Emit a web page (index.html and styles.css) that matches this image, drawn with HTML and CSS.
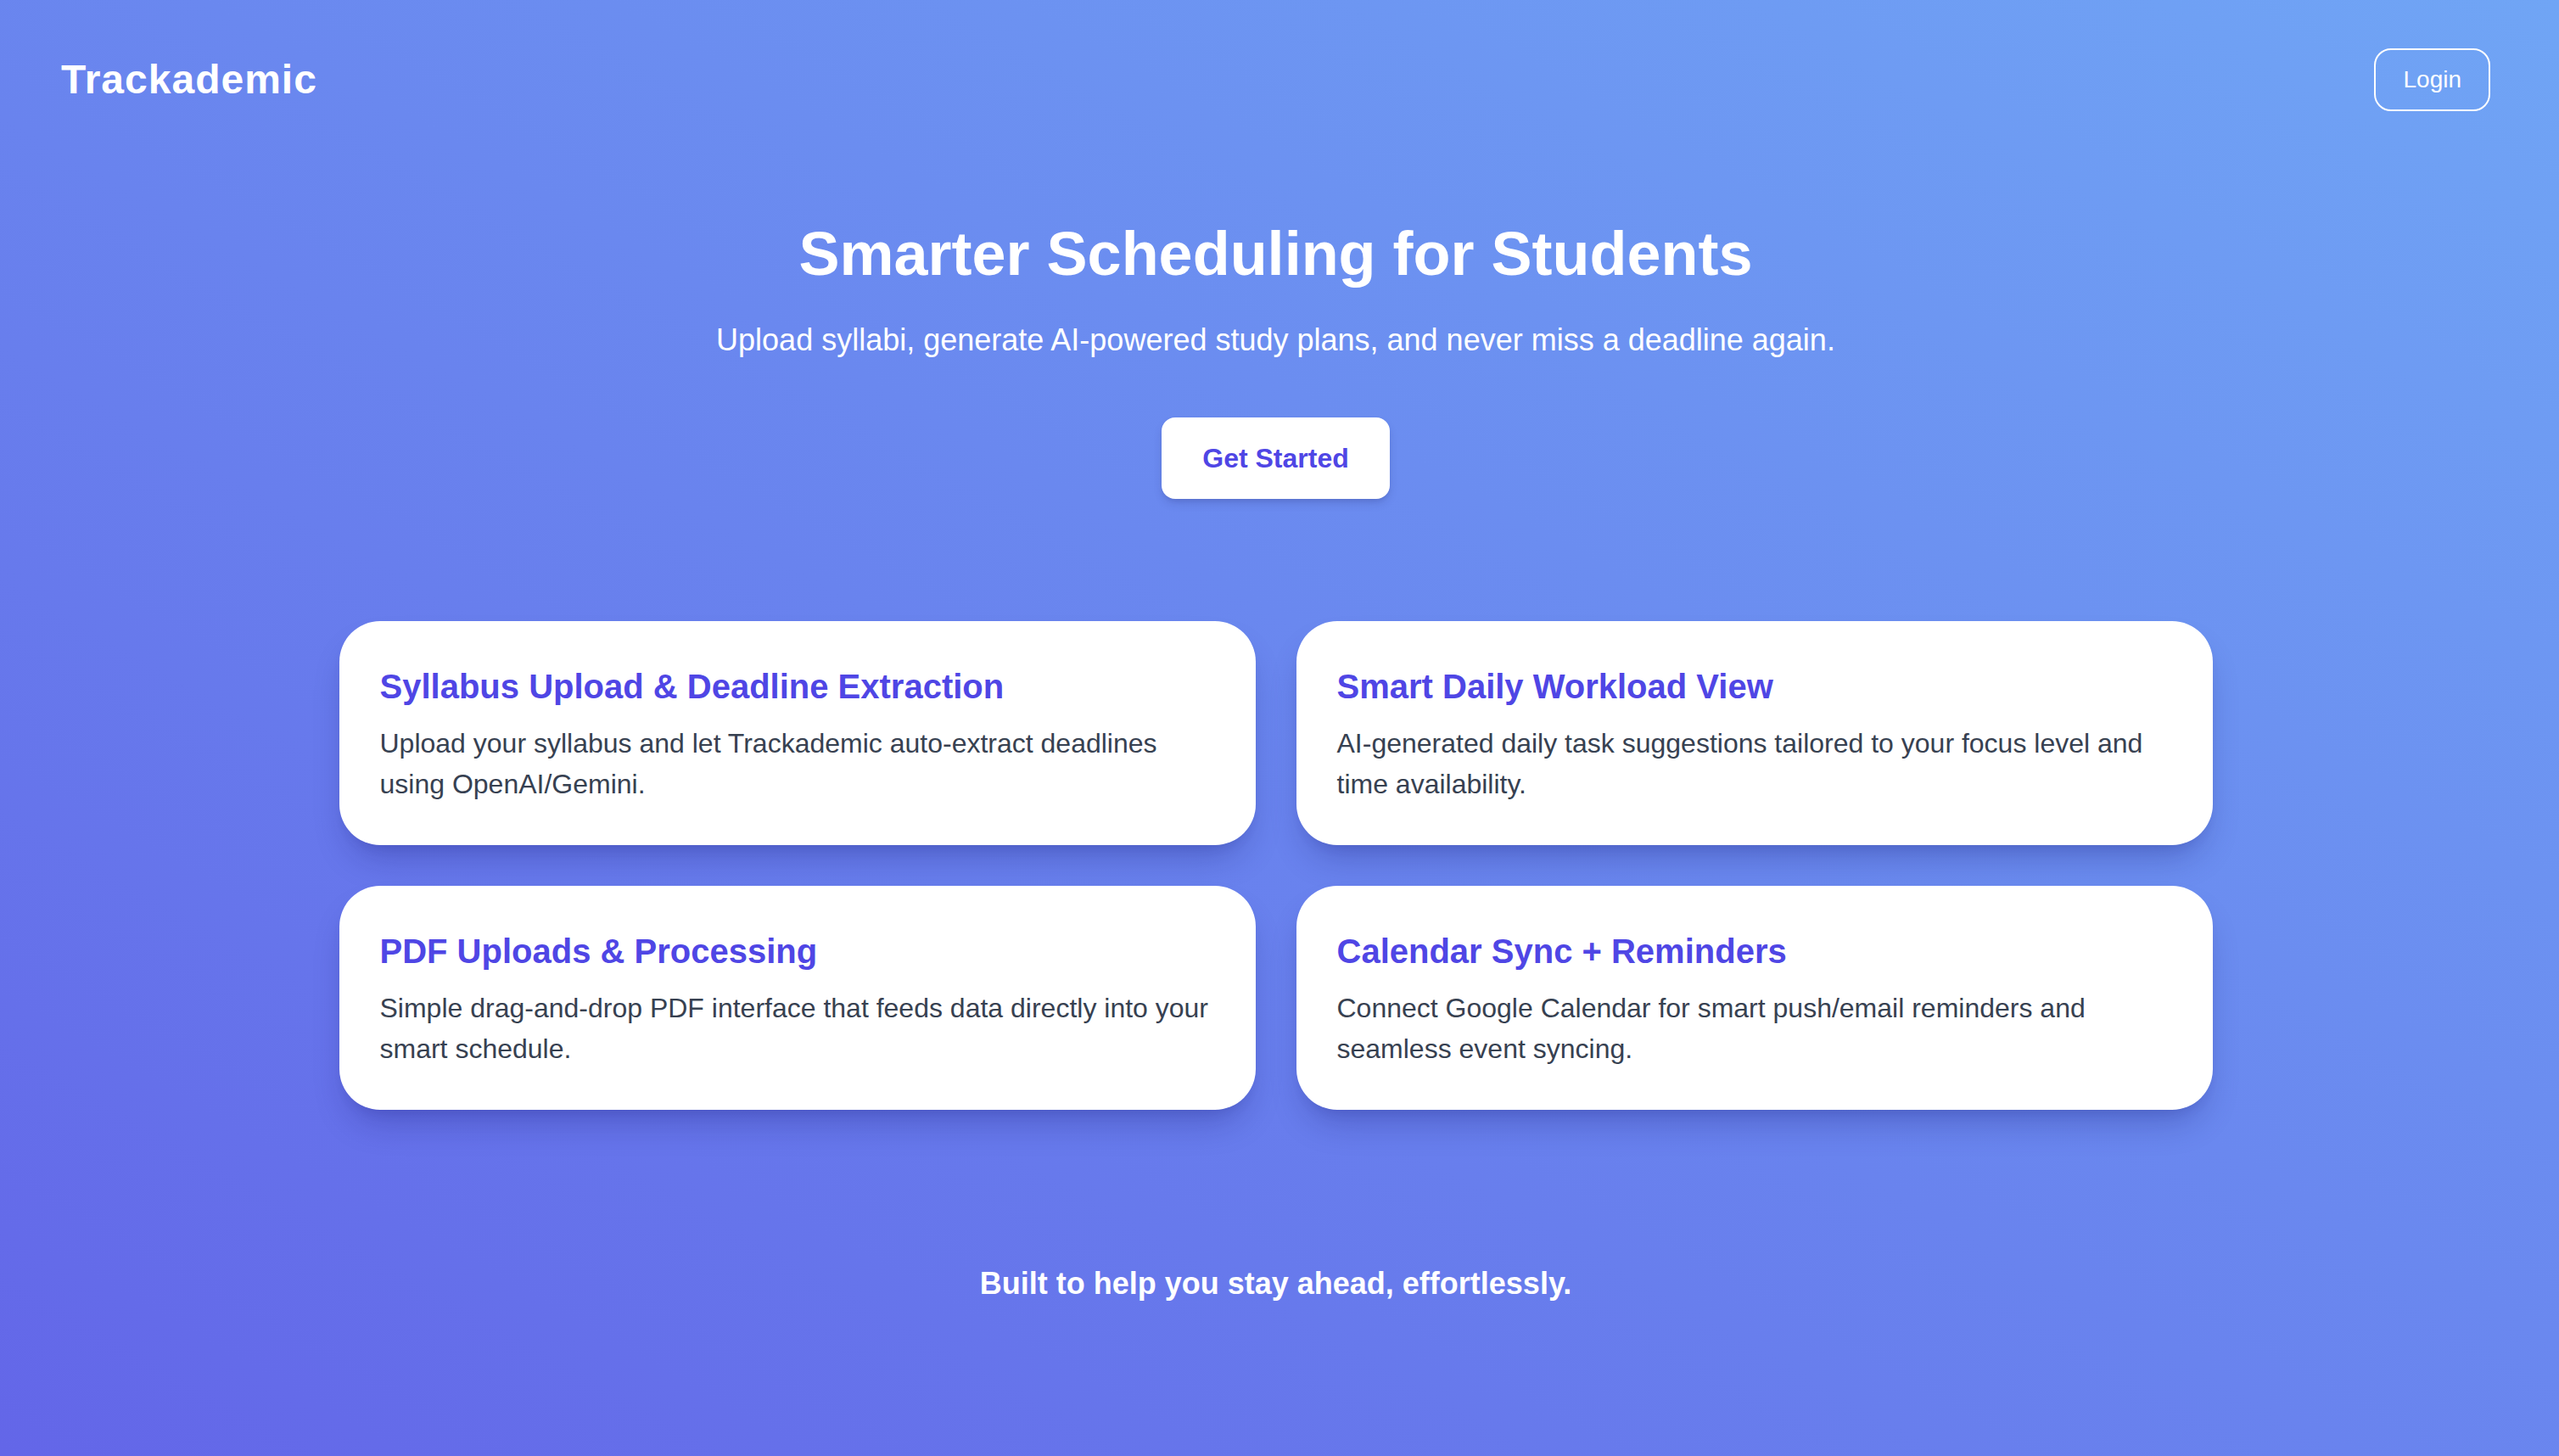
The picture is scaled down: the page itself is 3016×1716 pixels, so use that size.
FILE: index.html
```html
<!DOCTYPE html>
<html lang="en">
<head>
<meta charset="utf-8">
<title>Trackademic</title>
<link rel="stylesheet" href="styles.css">
</head>
<body>
<div class="page">
  <header class="topbar">
    <div class="logo">Trackademic</div>
    <button class="login-btn">Login</button>
  </header>

  <section class="hero">
    <h1 class="hero-title">Smarter Scheduling for Students</h1>
    <p class="hero-sub">Upload syllabi, generate AI-powered study plans, and never miss a deadline again.</p>
    <button class="cta-btn">Get Started</button>
  </section>

  <section class="features">
    <div class="card">
      <h2 class="card-title">Syllabus Upload &amp; Deadline Extraction</h2>
      <p class="card-text">Upload your syllabus and let Trackademic auto-extract deadlines using OpenAI/Gemini.</p>
    </div>
    <div class="card">
      <h2 class="card-title">Smart Daily Workload View</h2>
      <p class="card-text">AI-generated daily task suggestions tailored to your focus level and time availability.</p>
    </div>
    <div class="card">
      <h2 class="card-title">PDF Uploads &amp; Processing</h2>
      <p class="card-text">Simple drag-and-drop PDF interface that feeds data directly into your smart schedule.</p>
    </div>
    <div class="card">
      <h2 class="card-title">Calendar Sync + Reminders</h2>
      <p class="card-text">Connect Google Calendar for smart push/email reminders and seamless event syncing.</p>
    </div>
  </section>

  <footer class="tagline">Built to help you stay ahead, effortlessly.</footer>
</div>
</body>
</html>
```

FILE: styles.css
```css
* {
  box-sizing: border-box;
}

html, body {
  margin: 0;
  padding: 0;
}

body {
  min-height: 100vh;
  font-family: "Liberation Sans", Arial, Helvetica, sans-serif;
  color: #ffffff;
  background: linear-gradient(to top right, #6366e8 0%, #70a5f5 100%);
}

.page {
  min-height: 100vh;
  padding-right: 9px;
  display: flex;
  flex-direction: column;
}

.topbar {
  display: flex;
  align-items: center;
  justify-content: space-between;
  padding: 57px 72px 0 72px;
}

.logo {
  font-size: 48px;
  font-weight: 700;
  letter-spacing: 1px;
  line-height: 72px;
}

.login-btn {
  font-family: inherit;
  font-size: 28px;
  line-height: 38px;
  color: #ffffff;
  background: transparent;
  border: 2px solid #ffffff;
  border-radius: 20px;
  padding: 16px 32px;
}

.hero {
  display: flex;
  flex-direction: column;
  align-items: center;
  text-align: center;
  padding-top: 125px;
}

.hero-title {
  margin: 0;
  font-size: 72px;
  line-height: 86px;
  font-weight: 700;
}

.hero-sub {
  margin: 32px 0 0 0;
  font-size: 36px;
  line-height: 54px;
  font-weight: 400;
}

.cta-btn {
  margin-top: 64px;
  font-family: inherit;
  font-size: 32px;
  line-height: 48px;
  font-weight: 700;
  color: #4f46e5;
  background: #ffffff;
  border: none;
  border-radius: 16px;
  padding: 24px 48px;
  box-shadow: 0 6px 12px -2px rgba(30, 30, 90, 0.18), 0 3px 6px -3px rgba(30, 30, 90, 0.15);
}

.features {
  margin: 144px auto 0 auto;
  width: 2208px;
  display: grid;
  grid-template-columns: 1fr 1fr;
  gap: 48px;
}

.card {
  background: #ffffff;
  border-radius: 48px;
  padding: 52px 48px 48px 48px;
  box-shadow: 0 24px 40px -12px rgba(20, 20, 110, 0.30), 0 8px 16px -8px rgba(20, 20, 110, 0.12);
}

.card-title {
  margin: 0 0 18px 0;
  font-size: 40px;
  line-height: 50px;
  font-weight: 700;
  color: #4f46e5;
}

.card-text {
  margin: 0;
  font-size: 32px;
  line-height: 48px;
  color: #374151;
}

.tagline {
  margin-top: 178px;
  text-align: center;
  font-size: 36px;
  line-height: 54px;
  font-weight: 700;
}
```
